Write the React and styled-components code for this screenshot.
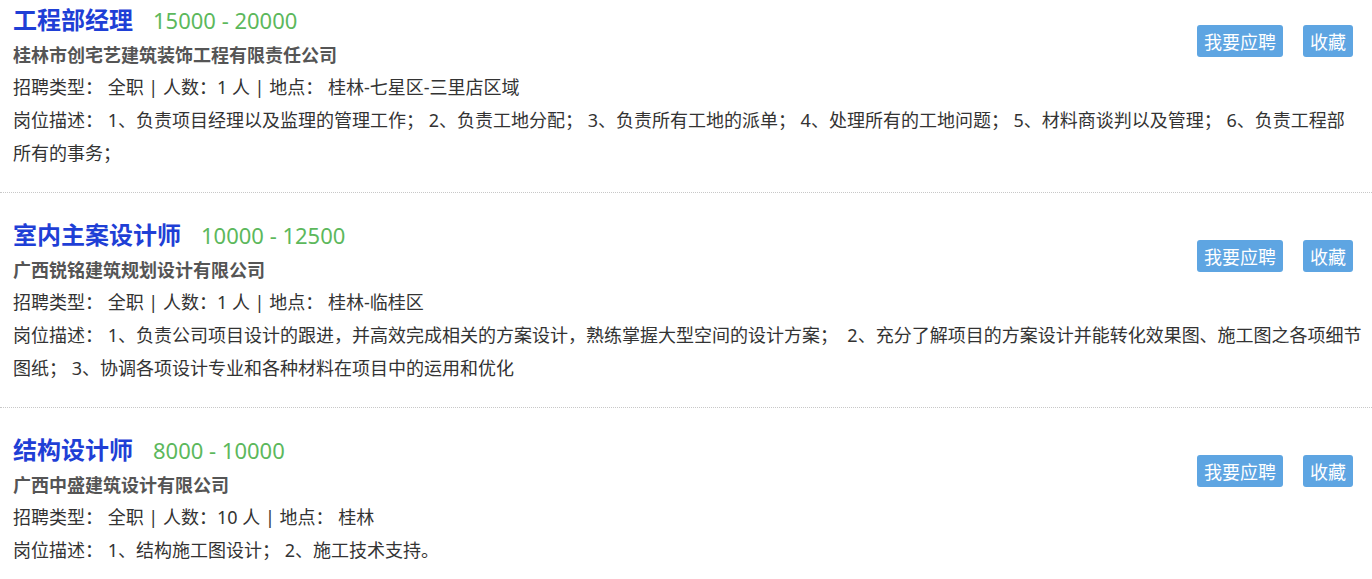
import React from 'react';
import styled, {createGlobalStyle} from "styled-components";

const GlobalStyle = createGlobalStyle`
  body {
    margin: 0;
    background: #fff;
    font-family: "Noto Sans", "Noto Sans CJK SC", sans-serif;
    color: #333;
  }
`;

const List = styled.div`
  width: 100%;
`;
const Item = styled.div`
  padding: 23px 19px 22px 13px;
  border-bottom: 1px dotted #c8c8c8;

  &:first-child {
    padding-top: 1px;
  }
`;
const Head = styled.div`
  display: flex;
  justify-content: space-between;
  align-items: flex-start;
`;
const TitleRow = styled.div`
  display: flex;
  align-items: baseline;
  gap: 20px;
  height: 38px;
  line-height: 38px;
`;
const Title = styled.span`
  font-size: 24px;
  font-weight: 700;
  color: #1f3fd6;
`;
const Salary = styled.span`
  font-size: 22px;
  color: #5cb85c;
`;
const Company = styled.div`
  font-size: 18px;
  font-weight: 700;
  color: #555;
  line-height: 32px;
`;
const Actions = styled.div`
  display: flex;
  gap: 20px;
  margin-top: 24px;
`;
const Button = styled.button`
  height: 32px;
  padding: 0 7px;
  border: none;
  border-radius: 3px;
  background: #5ea5e2;
  color: #fff;
  font-family: "Noto Sans CJK SC", sans-serif;
  font-size: 18px;
  cursor: pointer;
`;
const Line = styled.div`
  font-size: 18px;
  line-height: 33px;
  color: #333;
  white-space: pre;
`;

const jobs = [
    {
        title: "工程部经理",
        salary: "15000 - 20000",
        company: "桂林市创宅艺建筑装饰工程有限责任公司",
        meta: "招聘类型： 全职 | 人数：1 人 | 地点： 桂林-七星区-三里店区域",
        desc: [
            "岗位描述： 1、负责项目经理以及监理的管理工作； 2、负责工地分配； 3、负责所有工地的派单； 4、处理所有的工地问题； 5、材料商谈判以及管理； 6、负责工程部",
            "所有的事务；",
        ],
    },
    {
        title: "室内主案设计师",
        salary: "10000 - 12500",
        company: "广西锐铭建筑规划设计有限公司",
        meta: "招聘类型： 全职 | 人数：1 人 | 地点： 桂林-临桂区",
        desc: [
            "岗位描述： 1、负责公司项目设计的跟进，并高效完成相关的方案设计，熟练掌握大型空间的设计方案；  2、充分了解项目的方案设计并能转化效果图、施工图之各项细节",
            "图纸； 3、协调各项设计专业和各种材料在项目中的运用和优化",
        ],
    },
    {
        title: "结构设计师",
        salary: "8000 - 10000",
        company: "广西中盛建筑设计有限公司",
        meta: "招聘类型： 全职 | 人数：10 人 | 地点： 桂林",
        desc: ["岗位描述： 1、结构施工图设计； 2、施工技术支持。"],
    },
];

const App = () => {
    return (
        <List>
            <GlobalStyle/>
            {jobs.map(job => (
                <Item key={job.title}>
                    <Head>
                        <div>
                            <TitleRow>
                                <Title>{job.title}</Title>
                                <Salary>{job.salary}</Salary>
                            </TitleRow>
                            <Company>{job.company}</Company>
                        </div>
                        <Actions>
                            <Button>我要应聘</Button>
                            <Button>收藏</Button>
                        </Actions>
                    </Head>
                    <Line>{job.meta}</Line>
                    {job.desc.map(d => (
                        <Line key={d}>{d}</Line>
                    ))}
                </Item>
            ))}
        </List>
    );
};

export default App;
